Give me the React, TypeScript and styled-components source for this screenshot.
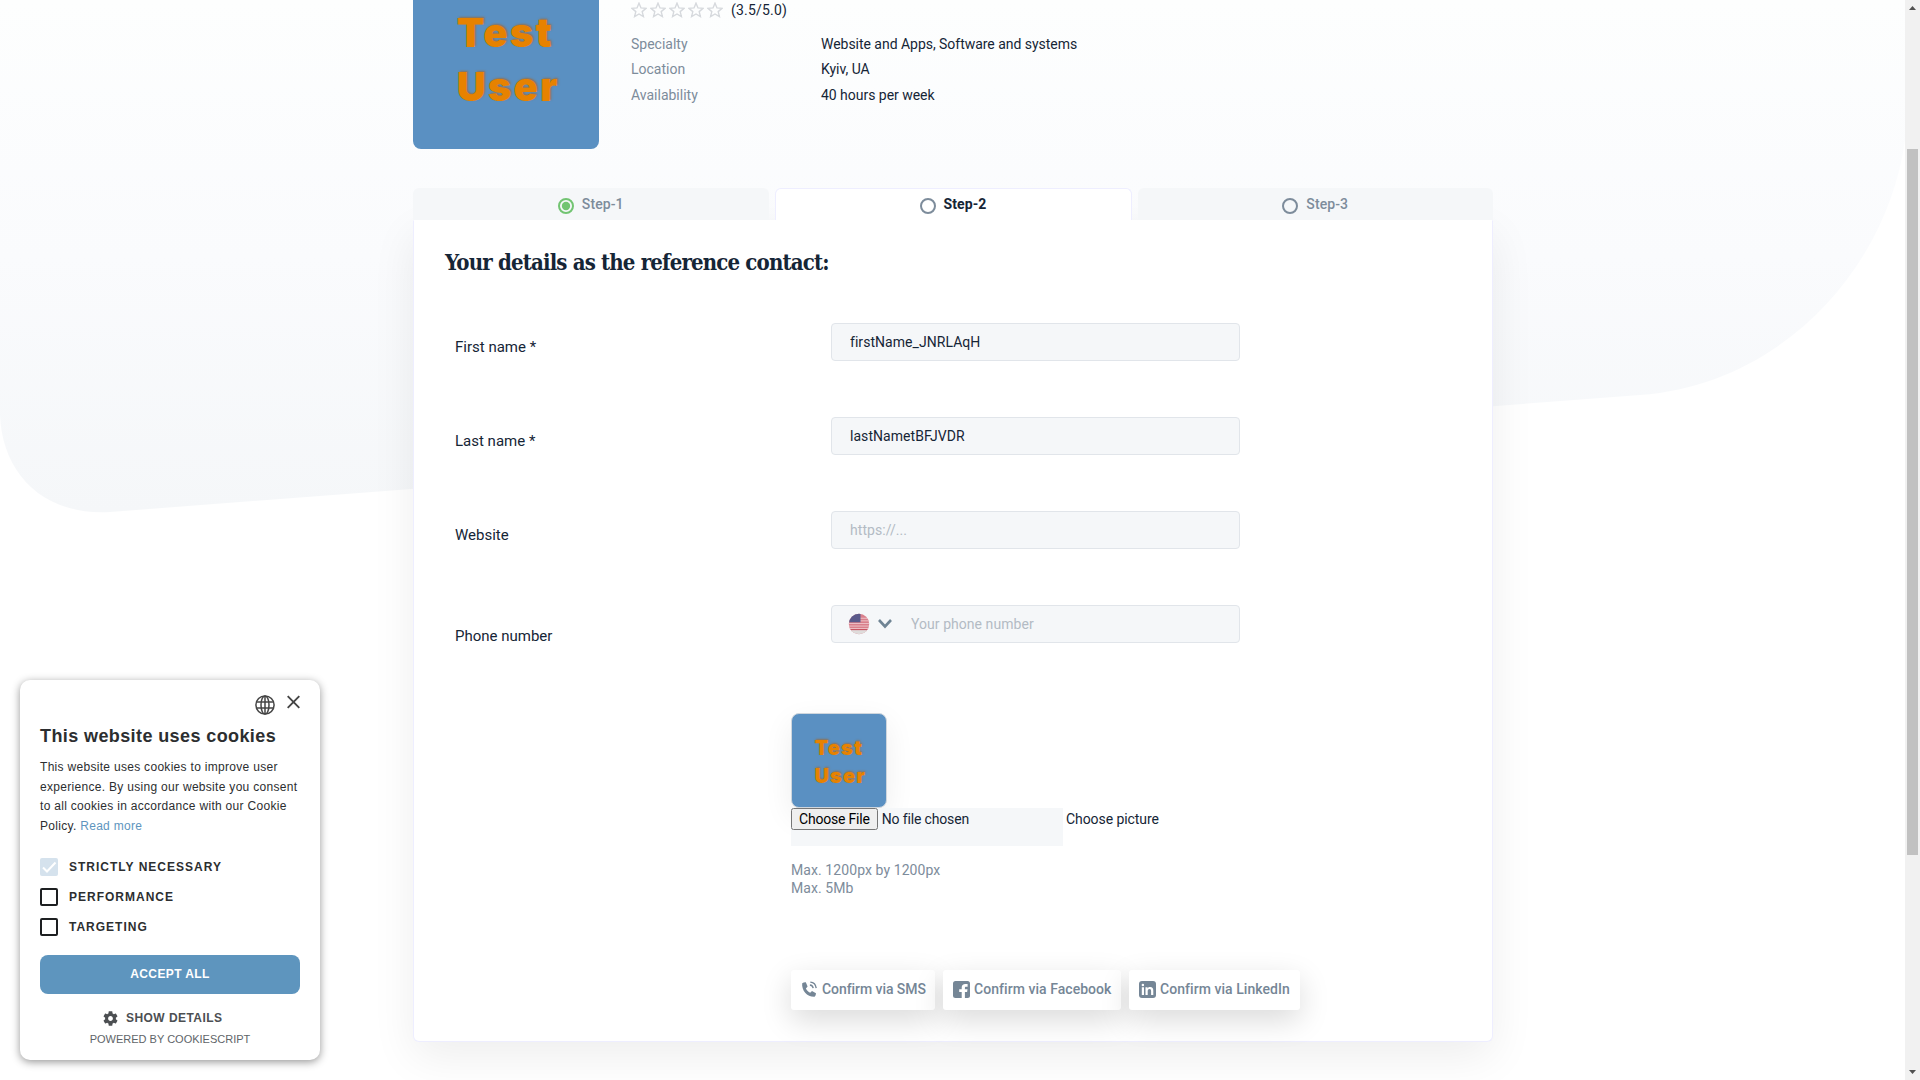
import React from "react";
import styled, { createGlobalStyle } from "styled-components";

const Global = createGlobalStyle`
  * { box-sizing: border-box; }
  html, body { margin: 0; height: 1080px; overflow: hidden; background: #fff; }
  body { font-family: Roboto, "Liberation Sans", sans-serif; font-size: 14px; color: #152536; }
`;

const Screen = styled.div`
  position: relative;
  isolation: isolate;
  display: flex;
  width: 1920px;
  height: 1080px;
  overflow: hidden;
`;
const Backdrop = styled.svg`
  position: absolute;
  left: 0;
  top: 0;
  z-index: -1;
`;
const Page = styled.main`
  width: 1905px;
  height: 1080px;
  padding-left: 413px;
  overflow: hidden;
`;

/* Scrollbar */
const ScrollTrack = styled.aside`
  width: 15px;
  height: 1080px;
  background: #f1f1f1;
  display: flex;
  flex-direction: column;
  align-items: center;
`;
const ScrollThumb = styled.div`
  width: 11px;
  height: 706px;
  margin: 134px 0 210px;
  background: #c1c1c1;
`;
const ScrollArrow = styled.svg`
  display: block;
  flex: none;
`;

/* Profile */
const Profile = styled.header`
  display: flex;
  height: 149px;
  align-items: flex-end;
`;
const Picture = styled.div<{ $size: number; $font: number; $radius: number; $framed?: boolean }>`
  flex: none;
  width: ${(p) => p.$size}px;
  height: ${(p) => p.$size - (p.$framed ? 1 : 0)}px;
  padding-top: ${(p) => p.$size * 0.045}px;
  border-radius: ${(p) => p.$radius}px;
  border: ${(p) => (p.$framed ? "1px solid #cfd6dd" : "0")};
  box-shadow: ${(p) => (p.$framed ? "0 10px 30px rgba(0,0,0,.07)" : "none")};
  background: #5a90c2;
  color: #e78200;
  display: flex;
  flex-direction: column;
  justify-content: center;
  align-items: flex-start;
  padding-left: ${(p) => p.$size * 0.235}px;
  font: 900 ${(p) => p.$font}px / ${(p) => p.$size * 0.291}px Inter, "Liberation Sans", sans-serif;
  letter-spacing: ${(p) => p.$font * 0.055}px;
  text-shadow: ${(p) => p.$font * 0.03}px ${(p) => p.$font * -0.03}px 2px rgba(150, 110, 70, 0.9);
`;
const Facts = styled.div`
  height: 149px;
  padding: 0 0 0 32px;
`;
const Rating = styled.div`
  display: flex;
  align-items: center;
  height: 20px;
  margin-bottom: 11px;
  letter-spacing: 0.2px;
`;
const Stars = styled.div`
  display: flex;
  gap: 3px;
  margin-right: 8px;
  svg { display: block; }
`;
const Fact = styled.dl`
  display: flex;
  height: 25.4px;
  margin: 0;
  line-height: 26px;
  letter-spacing: -0.03px;
`;
const FactName = styled.dt`
  width: 190px;
  color: #7d8c9b;
  letter-spacing: 0;
`;
const FactValue = styled.dd`
  margin: 0;
`;

/* Tabs and card */
const Wizard = styled.section`
  width: 1080px;
  margin-top: 39px;
`;
const Tabs = styled.nav`
  display: flex;
  gap: 6px;
  height: 32px;
`;
const Tab = styled.div<{ $active?: boolean }>`
  flex: ${(p) => (p.$active ? "0 0 357px" : "1")};
  display: flex;
  align-items: center;
  justify-content: center;
  gap: 8px;
  padding-bottom: 2px;
  border-radius: 6px 6px 0 0;
  border: 1px solid ${(p) => (p.$active ? "#eeeeff" : "#f5f7f9")};
  border-bottom: 0;
  background: ${(p) => (p.$active ? "#fff" : "#f5f7f9")};
  color: ${(p) => (p.$active ? "#152536" : "#7d8c9b")};
  font-weight: ${(p) => (p.$active ? 700 : 500)};
  letter-spacing: 0.1px;
  svg { margin-top: 4px; }
`;
const Card = styled.div`
  height: 822px;
  padding: 0 31px;
  background: #fff;
  border: 1px solid #eeeeff;
  border-top-color: #fff;
  border-radius: 0 0 6px 6px;
  box-shadow: 0 15px 45px rgba(0, 0, 0, 0.07);
`;
const Title = styled.h2`
  margin: 0;
  height: 102px;
  padding-top: 26px;
  font: 700 22px/30px "Roboto Slab", "DejaVu Serif Condensed", "DejaVu Serif", serif;
  letter-spacing: -0.84px;
  white-space: nowrap;
`;
const FormRow = styled.div<{ $drop?: number }>`
  display: flex;
  height: 94px;
  label {
    width: 386px;
    padding: ${(p) => 14 + (p.$drop ?? 0)}px 0 0 10px;
    font-size: 15px;
    line-height: 20px;
  }
`;
const Field = styled.div<{ $inset?: number }>`
  display: flex;
  align-items: center;
  width: 409px;
  height: 38px;
  padding-left: ${(p) => p.$inset ?? 18}px;
  background: #f5f7f9;
  border: 1px solid #e1e5ea;
  border-radius: 4px;
`;
const TextInput = styled.input`
  flex: 1;
  min-width: 0;
  border: 0;
  padding: 0;
  outline: 0;
  background: transparent;
  font: 14px Roboto, sans-serif;
  letter-spacing: 0.05px;
  color: #152536;
  &::placeholder { color: #b3bbc4; }
`;
const Country = styled.div`
  display: flex;
  align-items: center;
  gap: 8px;
  width: 63px;
`;
const Upload = styled.div`
  padding: 14px 0 0 346px;
`;
const FileRow = styled.div`
  display: flex;
  gap: 3px;
  height: 38px;
  line-height: 22px;
  letter-spacing: -0.07px;
`;
const FileInput = styled.input`
  width: 272px;
  height: 38px;
  background: #f5f7f9;
  font: 14px Roboto, sans-serif;
  letter-spacing: -0.15px;
  color: #152536;
  &::file-selector-button { font: inherit; letter-spacing: -0.2px; }
`;
const Limits = styled.p`
  margin: 15px 0 0;
  line-height: 18px;
  letter-spacing: 0.08px;
  color: #7d8c9b;
`;
const Confirmations = styled.div`
  display: flex;
  gap: 8px;
  margin-top: 73px;
`;
const Confirm = styled.button<{ $width: number; $tracking: number }>`
  display: flex;
  align-items: center;
  gap: 4px;
  width: ${(p) => p.$width}px;
  height: 40px;
  padding: 0 0 2px 10px;
  border: 0;
  border-radius: 3px;
  background: #fff;
  box-shadow: 0 10px 30px rgba(0, 0, 0, 0.15);
  color: #758696;
  font: 500 14px Roboto, sans-serif;
  letter-spacing: ${(p) => p.$tracking}px;
  white-space: nowrap;
`;

/* Cookie notice, floating over the page */
const Cookie = styled.div`
  position: absolute;
  left: 20px;
  top: 680px;
  width: 300px;
  height: 380px;
  padding: 15px 20px 0;
  border-radius: 10px;
  background: #fff;
  box-shadow: 0 2px 8px rgba(0, 0, 0, 0.42);
  font-family: "Liberation Sans", Arial, sans-serif;
  color: #2c2e30;
`;
const CookieTools = styled.div`
  display: flex;
  justify-content: flex-end;
  gap: 12px;
  height: 20px;
  svg { display: block; }
`;
const CookieTitle = styled.div`
  margin-top: 9px;
  font: 700 18px/24px "Liberation Sans", Arial, sans-serif;
  letter-spacing: 0.4px;
  white-space: nowrap;
`;
const CookieText = styled.p`
  margin: 10px -10px 0 0;
  font-size: 12px;
  line-height: 19.6px;
  letter-spacing: 0.3px;
  a { color: #5e95be; }
`;
const Options = styled.div`
  display: grid;
  gap: 12px;
  margin-top: 22px;
`;
const Option = styled.div`
  display: flex;
  align-items: center;
  gap: 11px;
  font: 700 12px/18px "Liberation Sans", Arial, sans-serif;
  letter-spacing: 1px;
`;
const Box = styled.span<{ $on?: boolean }>`
  width: 18px;
  height: 18px;
  border: ${(p) => (p.$on ? "0" : "2px solid #1d1f21")};
  border-radius: 2px;
  background: ${(p) => (p.$on ? "#d5e2ed" : "#fff")};
  svg { display: block; }
`;
const Accept = styled.button`
  display: block;
  width: 260px;
  height: 39px;
  margin-top: 19px;
  padding: 0 0 2px;
  border: 0;
  border-radius: 8px;
  background: #5e95be;
  color: #fff;
  font: 700 12px "Liberation Sans", Arial, sans-serif;
  letter-spacing: 0.4px;
`;
const Details = styled.div`
  display: flex;
  align-items: center;
  gap: 8px;
  height: 16px;
  margin: 16px 0 0 63px;
  font-size: 12px;
  font-weight: 700;
  letter-spacing: 0.45px;
  color: #4c4f52;
`;
const Powered = styled.div`
  margin-top: 5px;
  text-align: center;
  font-size: 11px;
  line-height: 16px;
  color: #606468;
`;

const Star = () => (
  <svg width="16" height="16" viewBox="0 0 16 16" fill="none" stroke="#d6d9dd" strokeWidth="1.4">
    <path d="M8 1.2l2 4.7 5.1.4-3.9 3.3 1.2 5L8 12l-4.4 2.6 1.2-5L.9 6.300l5.100-.4z" />
  </svg>
);

const StepMark = ({ done }: { done?: boolean }) => (
  <svg width="16" height="16" viewBox="0 0 16 16">
    <circle cx="8" cy="8" r="7" fill="none" stroke={done ? "#72c472" : "#7d8c9b"} strokeWidth="2" />
    {done && <circle cx="8" cy="8" r="4.2" fill="#72c472" />}
  </svg>
);

const Flag = () => (
  <svg width="22" height="22" viewBox="0 0 22 22">
    <defs>
      <clipPath id="disc"><circle cx="11" cy="11" r="10.200" /></clipPath>
    </defs>
    <g clipPath="url(#disc)">
      <rect width="22" height="22" fill="#d9808c" />
      {[4.8, 7.4, 10, 12.6, 15.1].map((y) => (
        <rect key={y} y={y} width="22" height="0.9" fill="#efc5ca" />
      ))}
      <rect y="16" width="22" height="1.200" fill="#c95563" />
      <rect y="17.200" width="22" height="5" fill="#dedcdb" />
      <rect width="12.500" height="9.300" fill="#5a5a8b" />
    </g>
  </svg>
);

export default function App() {
  return (
    <Screen>
      <Global />
      <Backdrop width="1905" height="520" viewBox="0 0 1905 520">
        <defs>
          <linearGradient id="sky" x1="0" y1="0" x2="0" y2="1">
            <stop offset="0" stopColor="#fdfefe" />
            <stop offset="0.5" stopColor="#fafbfd" />
            <stop offset="1" stopColor="#f5f7f9" />
          </linearGradient>
        </defs>
        <path fill="url(#sky)" d="M0 0H1905V140C1888 265 1785 384 1640 395L110 512C40 516 2 470 0 415Z" />
      </Backdrop>

      <Page>
        <Profile>
          <Picture $size={186} $font={40} $radius={8}>
            <span>Test</span>
            <span>User</span>
          </Picture>
          <Facts>
            <Rating>
              <Stars>
                <Star /><Star /><Star /><Star /><Star />
              </Stars>
              (3.5/5.0)
            </Rating>
            <Fact><FactName>Specialty</FactName><FactValue>Website and Apps, Software and systems</FactValue></Fact>
            <Fact><FactName>Location</FactName><FactValue>Kyiv, UA</FactValue></Fact>
            <Fact><FactName>Availability</FactName><FactValue>40 hours per week</FactValue></Fact>
          </Facts>
        </Profile>

        <Wizard>
          <Tabs>
            <Tab><StepMark done />Step-1</Tab>
            <Tab $active><StepMark />Step-2</Tab>
            <Tab><StepMark />Step-3</Tab>
          </Tabs>
          <Card>
            <Title>Your details as the reference contact:</Title>
            <FormRow>
              <label>First name *</label>
              <Field><TextInput defaultValue="firstName_JNRLAqH" /></Field>
            </FormRow>
            <FormRow>
              <label>Last name *</label>
              <Field><TextInput defaultValue="lastNametBFJVDR" /></Field>
            </FormRow>
            <FormRow>
              <label>Website</label>
              <Field><TextInput placeholder="https://..." /></Field>
            </FormRow>
            <FormRow $drop={7}>
              <label>Phone number</label>
              <Field $inset={16}>
                <Country>
                  <Flag />
                  <svg width="14" height="10" viewBox="0 0 14 10" fill="none" stroke="#6f8494" strokeWidth="2.600">
                    <path d="M1 1l6 6.500L13 1" />
                  </svg>
                </Country>
                <TextInput placeholder="Your phone number" />
              </Field>
            </FormRow>
            <Upload>
              <Picture $size={96} $font={20} $radius={8} $framed>
                <span>Test</span>
                <span>User</span>
              </Picture>
              <FileRow>
                <FileInput type="file" />
                <span>Choose picture</span>
              </FileRow>
              <Limits>Max. 1200px by 1200px<br />Max. 5Mb</Limits>
              <Confirmations>
                <Confirm $width={144} $tracking={-0.06}>
                  <svg width="17" height="18" viewBox="0 0 17 18" fill="#758696">
                    <path d="M1.200 3.200Q3 2 4.800 2.200L6.600 6.600 4.900 8.400C6 10.400 7.200 11.700 9.200 12.700L11 11.100 15 13.200Q15 15.400 13.600 16.800C6.500 17.200 .3 10.500 1.200 3.200Z" />
                    <path d="M9.300 2.100C12.600 2.300 14.800 4.700 15.200 8.200M8.900 5C10.700 5.200 11.800 6.300 12.200 8.200" fill="none" stroke="#758696" strokeWidth="1.400" />
                  </svg>
                  Confirm via SMS
                </Confirm>
                <Confirm $width={178} $tracking={0.05}>
                  <svg width="17" height="17" viewBox="0 0 17 17">
                    <rect width="17" height="17" rx="2.500" fill="#758696" />
                    <path d="M8.700 17V11H6.200V8.200H8.700V6.700C8.700 4.200 10.100 3 12.300 3H14.600V5.700H13.200C12.100 5.700 11.900 6.200 11.900 7V8.200H14.500L14.100 11H11.900V17Z" fill="#fff" />
                  </svg>
                  Confirm via Facebook
                </Confirm>
                <Confirm $width={171} $tracking={0.05}>
                  <svg width="17" height="17" viewBox="0 0 17 17">
                    <rect width="17" height="17" rx="3" fill="#758696" />
                    <path d="M2.800 6.300H5V14H2.800ZM6.500 6.300H8.600V7.400C9.100 6.500 10 6.100 11.200 6.100C13.400 6.100 14.300 7.400 14.300 9.800V14H12.100V10.100C12.100 8.800 11.700 8.100 10.600 8.100C9.400 8.100 8.700 8.900 8.700 10.300V14H6.500Z" fill="#fff" />
                    <circle cx="3.900" cy="3.900" r="1.250" fill="#fff" />
                  </svg>
                  Confirm via LinkedIn
                </Confirm>
              </Confirmations>
            </Upload>
          </Card>
        </Wizard>
      </Page>

      <ScrollTrack>
        <ScrollArrow width="15" height="15" viewBox="0 0 15 15"><path d="M4 10h7L7.500 6z" fill="#505050" /></ScrollArrow>
        <ScrollThumb />
        <ScrollArrow width="15" height="15" viewBox="0 0 15 15"><path d="M4 5h7L7.500 9z" fill="#505050" /></ScrollArrow>
      </ScrollTrack>

      <Cookie>
        <CookieTools>
          <svg width="20" height="20" viewBox="0 0 20 20" fill="none" stroke="#454545" strokeWidth="1.500">
            <circle cx="10" cy="10" r="9.100" />
            <ellipse cx="10" cy="10" rx="4" ry="9.100" />
            <path d="M1.500 7h17M1.500 13h17M10 1v18" />
          </svg>
          <svg width="13" height="14" viewBox="0 0 13 14" stroke="#454545" strokeWidth="1.900">
            <path d="M.7 1.200l11.600 11.600M12.300 1.200L.7 12.800" />
          </svg>
        </CookieTools>
        <CookieTitle>This website uses cookies</CookieTitle>
        <CookieText>
          This website uses cookies to improve user<br />
          experience. By using our website you consent<br />
          to all cookies in accordance with our Cookie<br />
          Policy. <a>Read more</a>
        </CookieText>
        <Options>
          <Option>
            <Box $on>
              <svg width="18" height="18" viewBox="0 0 18 18" fill="none" stroke="#fff" strokeWidth="2">
                <path d="M3 9.500l4 4L15.500 4.500" />
              </svg>
            </Box>
            STRICTLY NECESSARY
          </Option>
          <Option><Box />PERFORMANCE</Option>
          <Option><Box />TARGETING</Option>
        </Options>
        <Accept>ACCEPT ALL</Accept>
        <Details>
          <svg width="15" height="15" viewBox="2.200 2 19.600 20" fill="#4c4f52">
            <path d="M19.140 12.940c.04-.3.06-.61.06-.94 0-.32-.02-.64-.07-.94l2.030-1.580c.18-.14.23-.41.12-.61l-1.920-3.320c-.12-.22-.37-.29-.59-.22l-2.390.96c-.5-.38-1.030-.7-1.620-.94l-.36-2.540c-.04-.24-.24-.41-.48-.41h-3.840c-.24 0-.43.17-.47.41l-.36 2.540c-.59.24-1.130.57-1.620.94l-2.390-.96c-.22-.08-.47 0-.59.22L2.740 8.870c-.12.21-.08.47.12.61l2.030 1.580c-.05.3-.09.63-.09.94s.02.64.07.94l-2.030 1.580c-.18.14-.23.41-.12.61l1.920 3.320c.12.22.37.29.59.22l2.390-.96c.5.38 1.030.7 1.620.94l.36 2.540c.05.24.24.41.48.41h3.840c.24 0 .44-.17.47-.41l.36-2.540c.59-.24 1.130-.56 1.620-.94l2.390.96c.22.08.47 0 .59-.22l1.920-3.320c.12-.22.07-.47-.12-.61l-2.010-1.580zM12 15.200c-1.770 0-3.200-1.430-3.200-3.200s1.430-3.200 3.200-3.200 3.200 1.430 3.200 3.200-1.430 3.200-3.200 3.200z" />
          </svg>
          SHOW DETAILS
        </Details>
        <Powered>POWERED BY COOKIESCRIPT</Powered>
      </Cookie>
    </Screen>
  );
}
